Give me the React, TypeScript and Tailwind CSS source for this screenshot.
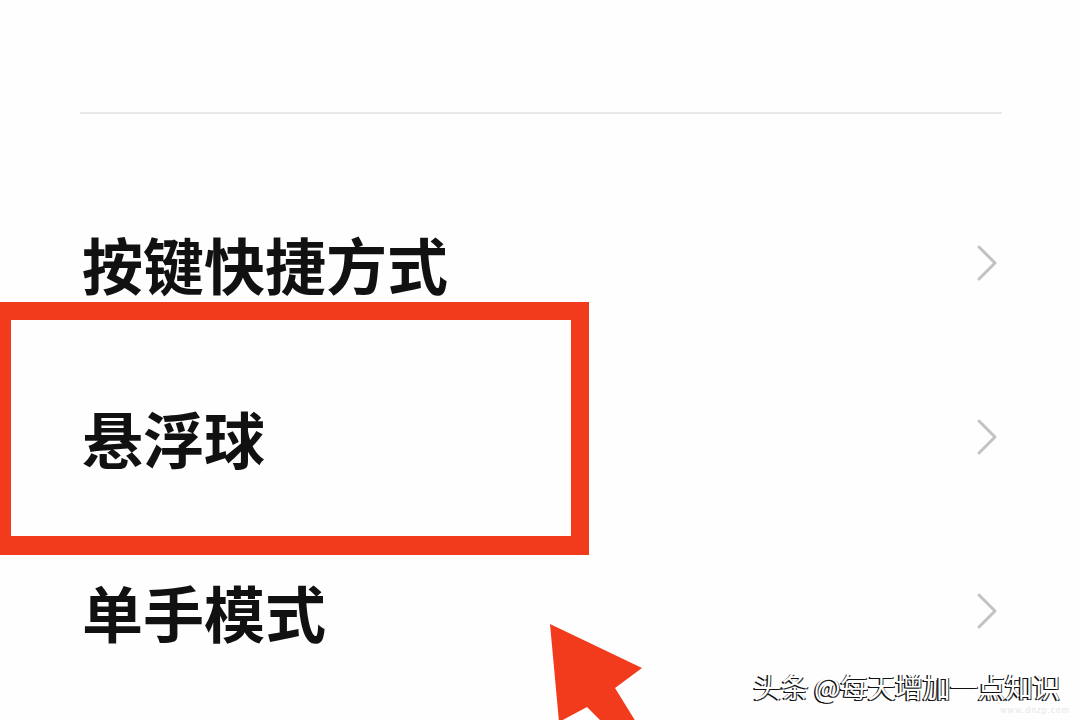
import React from "react";

const rows = ["按键快捷方式", "悬浮球", "单手模式"];

function Chevron() {
    return (
        <svg width="26" height="40" viewBox="0 0 26 40" className="shrink-0">
            <path
                d="M5 4 L21 20 L5 36"
                fill="none"
                stroke="#c2c2c2"
                strokeWidth="3"
                strokeLinecap="round"
                strokeLinejoin="round"
            />
        </svg>
    );
}

export default function App() {
    return (
        <div
            className="relative w-[1080px] h-[720px] overflow-hidden bg-[#fefefe]"
            style={{ fontFamily: '"Noto Sans CJK SC", "Noto Sans", sans-serif' }}
        >
            <div className="pt-[112px] pl-[80px] pr-[78px]">
                <div className="h-[2px] bg-[#e9e9e9]" />
            </div>

            <div className="mt-[62px] flex flex-col">
                {rows.map((label) => (
                    <div
                        key={label}
                        className="h-[174px] flex items-center justify-between pl-[82px] pr-[80px]"
                    >
                        <span className="text-[61px] leading-none font-bold text-[#111]">
                            {label}
                        </span>
                        <Chevron />
                    </div>
                ))}
            </div>

            {/* highlight box */}
            <div className="absolute left-0 top-[302px] w-[589px] h-[253px] border-[#f23a1c] border-t-[18px] border-b-[19px] border-l-[11px] border-r-[18px]" />

            {/* arrow */}
            <svg
                className="absolute left-0 top-0"
                width="1080"
                height="720"
                viewBox="0 0 1080 720"
            >
                <polygon
                    points="550,624 642,668 615,688 636,722 602,722 587,707 559,722"
                    fill="#f23a1c"
                />
            </svg>

            {/* watermark */}
            <div className="absolute right-[20px] bottom-[6px] flex flex-col items-end">
                <div
                    className="text-[28px] leading-none text-white tracking-[-0.5px] whitespace-nowrap"
                    style={{ textShadow: "-1.5px 1px 0 #111, 1px 1px 0 #333" }}
                >
                    头条 @每天增加一点知识
                </div>
                <div className="mt-[6px] mr-[-10px] text-[8px] leading-none text-[#e6e6e6] tracking-[1px]">
                    www.dnzp.com
                </div>
            </div>
        </div>
    );
}
